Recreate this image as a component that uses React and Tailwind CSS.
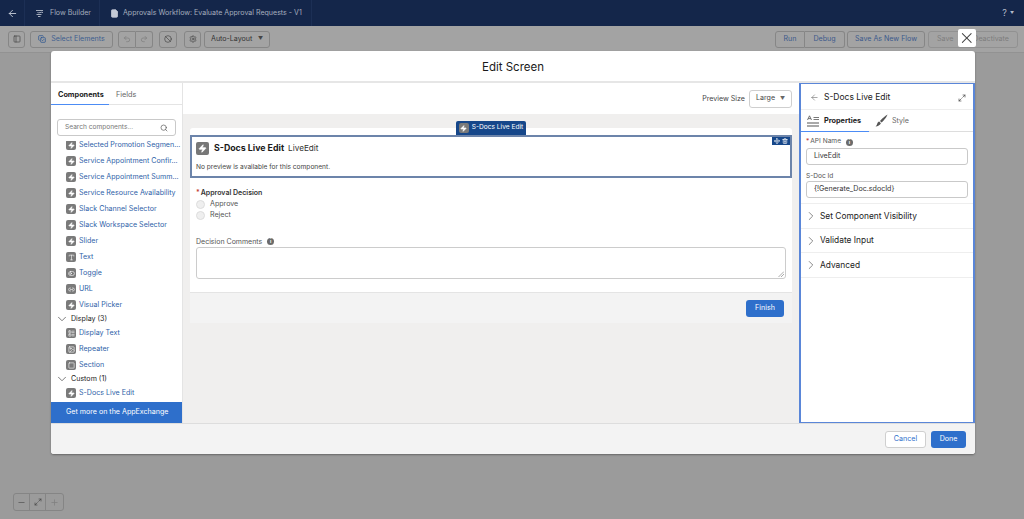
import React from "react";
import { ArrowLeft, ChevronDown, ChevronRight, Search, Undo2, Redo2, Ban, Settings, X, FileText, Zap, Type, ToggleLeft, Link2, LayoutList, Image, Square, Maximize2, Move, Trash2, Minus, Plus, PanelLeft, CopyCheck } from "lucide-react";

const font = { fontFamily: '"Inter","Liberation Sans",sans-serif' };

function Ic({ icon: I = Zap }) {
  return (
    <span className="flex h-[10px] w-[10px] shrink-0 items-center justify-center rounded-[2px] bg-[#7a7a7a]">
      <I size={7} color="#fff" fill={I === Zap ? "#fff" : "none"} strokeWidth={2} />
    </span>
  );
}

function Item({ label, icon }) {
  return (
    <div className="flex h-4 shrink-0 items-center gap-[3px] pl-[15px] text-[7.1px] text-[#2f5fa8]">
      <Ic icon={icon} />
      <span className="whitespace-nowrap">{label}</span>
    </div>
  );
}

function Group({ label }) {
  return (
    <div className="flex h-[12px] shrink-0 items-center gap-[2px] pl-[4px] text-[7.1px] text-[#222]">
      <ChevronDown size={14} color="#555" strokeWidth={1.3} />
      <span>{label}</span>
    </div>
  );
}

function ToolBtn({ children, className = "", between = false }) {
  const j = between ? "justify-between" : "justify-center";
  return (
    <div className={`flex h-[17px] items-center ${j} rounded-[3px] border border-[#868686] text-[7.1px] ${className}`}>
      {children}
    </div>
  );
}

function Accordion({ label }) {
  return (
    <div className="flex h-[24.5px] items-center gap-[2px] border-b border-[#eeeeee] pl-[3px] pt-[1px] text-[8.4px] text-[#222]">
      <ChevronRight size={14} color="#666" strokeWidth={1.3} />
      <span>{label}</span>
    </div>
  );
}

function Radio({ label }) {
  return (
    <div className="flex h-[11.5px] items-center gap-[5px] text-[7.1px] text-[#555]">
      <span className="h-[9px] w-[9px] rounded-full border border-[#dddddd] bg-[#efefef]" />
      <span>{label}</span>
    </div>
  );
}

function InfoDot() {
  return (
    <span className="flex h-[7px] w-[7px] items-center justify-center rounded-full bg-[#6b6b6b] text-[5px] font-bold leading-none text-white">i</span>
  );
}

export default function App() {
  return (
    <div style={font} className="relative flex h-[519px] w-[1024px] flex-col overflow-hidden bg-[#9b9b9b]">
      {/* navy header */}
      <header className="flex h-[26px] shrink-0 items-center bg-[#14264a] text-[7.05px] text-[#a4adbd]">
        <div className="flex h-full w-[25px] items-center justify-center border-r border-[#1c2f55] pl-[1px]">
          <ArrowLeft size={11} color="#c4cad6" strokeWidth={2} />
        </div>
        <div className="flex h-full w-[75px] items-center gap-[6px] border-r border-[#1c2f55] pl-[10px]">
          <svg width="9" height="9" viewBox="0 0 9 9" fill="none" stroke="#b4bbc9" strokeWidth="0.9">
            <path d="M1 1.5 H8 M2.5 3.5 C4 4.6 6 2.6 8 3.5 M1.5 5.5 H6.5 M3 7.5 H5.5" />
          </svg>
          <span>Flow Builder</span>
        </div>
        <div className="flex h-full items-center gap-[4px] border-r border-[#1c2f55] pl-[10px] pr-[9px]">
          <FileText size={9} color="#c4cad6" fill="#c4cad6" />
          <span>Approvals Workflow: Evaluate Approval Requests - V1</span>
        </div>
        <div className="ml-auto flex items-center gap-[3px] pr-[10px] text-[9px] text-[#b4bbc9]">
          <span>?</span>
          <span className="text-[4px]">▼</span>
        </div>
      </header>

      {/* toolbar */}
      <div className="flex h-[27px] shrink-0 items-center gap-[5px] border-b border-[#929292] bg-[#a3a3a3] pl-[8px] pr-[6px]">
        <ToolBtn className="w-[17px]"><PanelLeft size={8} color="#444" /></ToolBtn>
        <ToolBtn className="w-[83px] gap-[5px] text-[#3f5f90]"><CopyCheck size={8} color="#1f4f8f" /><span>Select Elements</span></ToolBtn>
        <div className="flex">
          <ToolBtn className="w-[18px] rounded-r-none border-[#8f8f8f]"><Undo2 size={8} color="#7c7c7c" /></ToolBtn>
          <ToolBtn className="w-[17px] rounded-l-none border-l-0 border-[#8f8f8f]"><Redo2 size={8} color="#7c7c7c" /></ToolBtn>
        </div>
        <ToolBtn className="ml-[1px] w-[18px]"><Ban size={8} color="#444" /></ToolBtn>
        <ToolBtn className="ml-[2px] w-[17px]"><Settings size={8} color="#444" /></ToolBtn>
        <ToolBtn between className="-ml-[2px] w-[66px] px-[6px] text-[#333]"><span>Auto-Layout</span><span className="text-[5px] text-[#444]">▼</span></ToolBtn>
        <div className="ml-auto flex gap-[2px]">
          <div className="flex">
            <ToolBtn className="w-[30px] rounded-r-none text-[#3c5a8c]">Run</ToolBtn>
            <ToolBtn className="w-[40px] rounded-l-none border-l-0 text-[#3c5a8c]">Debug</ToolBtn>
          </div>
          <ToolBtn className="w-[78px] text-[#3c5a8c]">Save As New Flow</ToolBtn>
          <ToolBtn between className="ml-[1px] w-[90px] border-[#919191] px-[8px] text-[#7d7d7d]">
            <span>Save</span><span>Deactivate</span>
          </ToolBtn>
        </div>
      </div>

      {/* zoom control */}
      <div className="mb-[8px] ml-[12.5px] mt-auto flex h-[18px] w-[51px] items-center rounded-[3px] border border-[#858585]">
        <div className="flex h-full w-[17px] items-center justify-center border-r border-[#858585]"><Minus size={9} color="#555" /></div>
        <div className="flex h-full w-[17px] items-center justify-center border-r border-[#858585]"><Maximize2 size={8} color="#444" /></div>
        <div className="flex h-full w-[17px] items-center justify-center"><Plus size={9} color="#7f7f7f" /></div>
      </div>

      {/* close */}
      <div className="absolute left-[958px] top-[29px] flex h-[18px] w-[17.5px] items-center justify-center rounded-[2px] bg-white">
        <X size={22} color="#444" strokeWidth={1.4} />
      </div>

      {/* modal */}
      <div className="absolute left-[51px] top-[51px] flex h-[403px] w-[924px] flex-col overflow-hidden rounded-[3px] bg-white shadow-[0_1px_2px_rgba(0,0,0,0.35)]">
        <div className="flex h-[32px] shrink-0 items-center justify-center border-b-2 border-[#e6e6e6] pt-[4px] text-[11.5px] text-[#1a1a1a]">
          Edit Screen
        </div>

        <div className="flex min-h-0 flex-1">
          {/* left */}
          <aside className="flex w-[132px] shrink-0 flex-col border-r border-[#e4e4e4]">
            <div className="flex h-[22px] shrink-0 items-center border-b border-[#e4e4e4] pt-[3px] text-[7.3px]">
              <div className="relative flex h-full w-[58px] items-center pl-[7px] font-bold text-[#222] after:absolute after:bottom-[-1px] after:left-0 after:h-[1px] after:w-full after:bg-[#4c8cf5] after:content-['']">Components</div>
              <div className="pl-[7px] text-[#666]">Fields</div>
            </div>
            <div className="mx-[6px] mt-[14px] flex h-[17px] shrink-0 items-center justify-between rounded-[3px] border border-[#c9c9c9] px-[7px] text-[6.6px] text-[#777]">
              <span>Search components...</span>
              <Search size={8} color="#555" />
            </div>
            <div className="mt-[5px] flex min-h-0 flex-1 flex-col overflow-hidden">
              <div className="-mt-[4px] flex flex-col">
                <Item label="Selected Promotion Segmen..." />
                <Item label="Service Appointment Confir..." />
                <Item label="Service Appointment Summ..." />
                <Item label="Service Resource Availability" />
                <Item label="Slack Channel Selector" />
                <Item label="Slack Workspace Selector" />
                <Item label="Slider" />
                <Item label="Text" icon={Type} />
                <Item label="Toggle" icon={ToggleLeft} />
                <Item label="URL" icon={Link2} />
                <Item label="Visual Picker" />
                <Group label="Display (3)" />
                <Item label="Display Text" icon={LayoutList} />
                <Item label="Repeater" icon={Image} />
                <Item label="Section" icon={Square} />
                <Group label="Custom (1)" />
                <Item label="S-Docs Live Edit" />
              </div>
            </div>
            <div className="flex h-[21px] shrink-0 items-center bg-[#2e6fcb] pl-[15px] text-[7.1px] text-white">
              Get more on the AppExchange
            </div>
          </aside>

          {/* center */}
          <main className="flex min-w-0 flex-1 flex-col bg-[#f0efee]">
            <div className="flex h-[31px] shrink-0 items-center justify-end gap-[4px] bg-white pr-[7px] text-[7.1px] text-[#444]">
              <span className="pt-[2px]">Preview Size</span>
              <div className="flex h-[18px] w-[43px] items-center justify-between rounded-[3px] border border-[#cfcfcf] px-[6px] text-[#444]">
                <span>Large</span><span className="text-[5px] text-[#666]">▼</span>
              </div>
            </div>

            <div className="relative mx-[7px] mt-[14px] flex flex-col rounded-t-[3px] bg-white pt-[7px]">
              <div className="absolute left-[266px] top-[-7px] flex h-[14px] w-[70px] items-center justify-center gap-[3px] rounded-t-[2px] bg-[#16478a] text-[6.6px] text-white">
                <Ic />
                <span>S-Docs Live Edit</span>
              </div>

              <div className="relative h-[43px] border-2 border-[#6c84aa] px-[4px] pt-[4px]">
                <div className="absolute right-0 top-0 flex h-[8px] w-[18px] items-center justify-center gap-[2px] bg-[#16478a]">
                  <Move size={6} color="#fff" strokeWidth={2.5} />
                  <Trash2 size={6} color="#fff" strokeWidth={2.5} />
                </div>
                <div className="flex h-[14px] items-center gap-[4px]">
                  <span className="flex h-[13px] w-[13px] items-center justify-center rounded-[2px] bg-[#777]">
                    <Zap size={9} color="#fff" fill="#fff" />
                  </span>
                  <span className="ml-[1px] text-[8.8px] font-bold text-[#1a1a1a]">S-Docs Live Edit</span>
                  <span className="text-[8.2px] text-[#333]">LiveEdit</span>
                </div>
                <div className="mt-[8px] text-[6.6px] text-[#444]">No preview is available for this component.</div>
              </div>

              <div className="flex flex-col px-[6px] pt-[10px]">
                <div className="flex items-center gap-[1px] text-[7px] font-semibold text-[#333]">
                  <span className="text-[#c23934]">*</span><span>Approval Decision</span>
                </div>
                <div className="flex flex-col">
                  <Radio label="Approve" />
                  <Radio label="Reject" />
                </div>
                <div className="mt-[15px] flex items-center gap-[5px] text-[7px] text-[#555]">
                  <span>Decision Comments</span><InfoDot />
                </div>
                <div className="relative h-[32px] rounded-[3px] border border-[#cccccc]">
                  <svg className="absolute bottom-[1px] right-[1px]" width="6" height="6" viewBox="0 0 6 6" stroke="#888" strokeWidth="0.7">
                    <path d="M0.5 6 L6 0.5 M3 6 L6 3" />
                  </svg>
                </div>
              </div>

              <div className="mt-[13px] flex h-[31px] items-center justify-end border-t border-[#e4e4e4] bg-[#f3f3f3] pr-[8px]">
                <div className="flex h-[17px] w-[38px] items-center justify-center rounded-[3px] bg-[#2e6fcb] text-[7.1px] text-white">Finish</div>
              </div>
            </div>
          </main>

          {/* right */}
          <aside className="flex w-[176px] shrink-0 flex-col border-x-2 border-y border-[#5a86d8]">
            <div className="flex h-[26px] shrink-0 items-center border-b border-[#eeeeee] pl-[9px] pr-[7px] pt-[2px]">
              <ArrowLeft size={9} color="#666" strokeWidth={1.5} />
              <span className="ml-[5px] text-[8.5px] text-[#222]">S-Docs Live Edit</span>
              <Maximize2 size={8} color="#444" className="ml-auto" />
            </div>
            <div className="flex h-[22px] shrink-0 items-center border-b border-[#dddddd]">
              <div className="relative flex h-full w-[68px] items-center gap-[5px] pl-[6px] after:absolute after:bottom-[-1px] after:left-0 after:h-[1px] after:w-full after:bg-[#4c8cf5] after:content-['']">
                <svg width="12" height="12" viewBox="0 0 12 12" fill="none" stroke="#555">
                  <path d="M0.5 5 L2.5 0.8 L4.5 5 M1.2 3.6 H3.8" strokeWidth="0.8" />
                  <path d="M6.5 2.5 H12 M6.5 4.5 H12" strokeWidth="0.8" />
                  <path d="M0 8 H12 M0 11 H12" strokeWidth="1.2" />
                </svg>
                <span className="pt-[2px] text-[7.3px] font-bold text-[#222]">Properties</span>
              </div>
              <div className="flex items-center gap-[4px] pl-[6px] text-[7.1px] text-[#666]">
                <svg width="13" height="13" viewBox="0 0 13 13" fill="#555">
                  <path d="M12.5 0.5 C11 1.5 7 4.5 5 7 L6.5 8.5 C9 6.5 12 2.5 12.5 0.5 Z" />
                  <path d="M4.2 7.6 L5.9 9.2 C5.2 11.2 2.8 12.4 0.5 12.5 C1.8 11.6 1.9 10.6 2.3 9.6 C2.6 8.6 3.3 8 4.2 7.6 Z" />
                </svg>
                <span className="pt-[2px]">Style</span>
              </div>
            </div>

            <div className="flex flex-col px-[5px] pb-[5px] pt-[5px]">
              <div className="flex h-[9px] items-center gap-[1px] pt-[1px] text-[6.6px] text-[#555]">
                <span className="text-[#c23934]">*</span><span>API Name</span><span className="ml-[4px]"><InfoDot /></span>
              </div>
              <div className="mt-[2px] flex h-[17px] items-center rounded-[3px] border border-[#c9c9c9] pl-[7px] text-[7.1px] text-[#333]">LiveEdit</div>
              <div className="mt-[6px] flex h-[9px] items-center pt-[2px] text-[6.6px] text-[#555]">S-Doc Id</div>
              <div className="mt-[1px] flex h-[17px] items-center rounded-[3px] border border-[#c9c9c9] pl-[7px] text-[7.1px] text-[#333]">{"{!Generate_Doc.sdocId}"}</div>
            </div>
            <div className="border-t border-[#eeeeee]">
              <Accordion label="Set Component Visibility" />
              <Accordion label="Validate Input" />
              <Accordion label="Advanced" />
            </div>
          </aside>
        </div>

        <div className="flex h-[31px] shrink-0 items-center justify-end gap-[5px] border-t border-[#dddddd] bg-[#f3f3f3] pr-[9px]">
          <div className="flex h-[17px] w-[41px] items-center justify-center rounded-[3px] border border-[#cfcfcf] bg-white text-[7.1px] text-[#2e6fcb]">Cancel</div>
          <div className="flex h-[17px] w-[35px] items-center justify-center rounded-[3px] bg-[#2e6fcb] text-[7.1px] text-white">Done</div>
        </div>
      </div>
    </div>
  );
}
